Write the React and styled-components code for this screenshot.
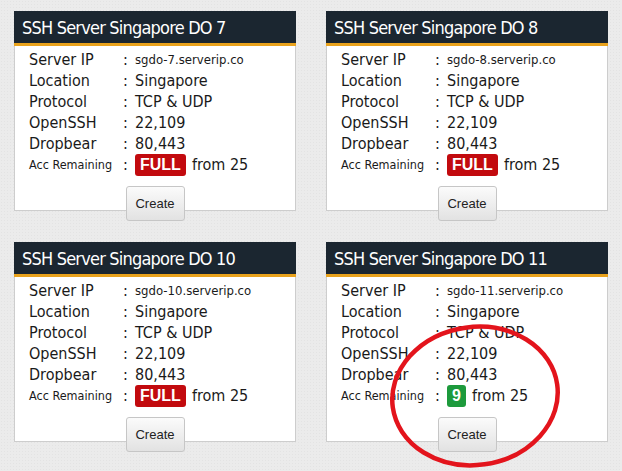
import styled, { createGlobalStyle } from "styled-components";

const GlobalStyle = createGlobalStyle`
  body {
    margin: 0;
    background-color: #ebebeb;
    font-family: "DejaVu Sans", "Liberation Sans", sans-serif;
  }
`;

const Page = styled.div`
  position: relative;
  width: 622px;
  height: 471px;
  overflow: hidden;
  box-sizing: border-box;
  padding: 11px 0 0 14px;
  background-color: #ebebeb;
  background-image: radial-gradient(rgba(0, 0, 0, 0.035) 1px, transparent 1px);
  background-size: 3px 3px;
`;

const Grid = styled.div`
  display: grid;
  grid-template-columns: 282px 282px;
  column-gap: 30px;
  row-gap: 31px;
`;

const Card = styled.div`
  height: 200px;
  box-sizing: border-box;
  background: #fff;
  border: 1px solid #cdcdcd;
  border-top: none;
  display: flex;
  flex-direction: column;
`;

const Header = styled.div`
  flex-shrink: 0;
  height: 32px;
  background: #1b2630;
  border-bottom: 3px solid #e9a21c;
  margin: 0 -1px;
  display: flex;
  align-items: center;
  padding-left: 8px;
  color: #fff;
  font-size: 18px;
  letter-spacing: -0.8px;
  font-stretch: condensed;
  white-space: nowrap;
`;

const Rows = styled.div`
  flex-shrink: 0;
  display: grid;
  grid-template-columns: 94px 12px auto;
  grid-auto-rows: 21px;
  padding: 3px 0 0 14px;
  color: #1a1a1a;
  font-size: 16px;
  font-stretch: condensed;
  align-items: center;
`;

const Label = styled.div`
  font-size: ${(p) => (p.small ? "12.5px" : "16px")};
  white-space: nowrap;
`;

const Colon = styled.div``;

const Value = styled.div`
  font-size: ${(p) => (p.small ? "13px" : "16px")};
  white-space: nowrap;
  display: flex;
  align-items: center;
  gap: 6px;
`;

const Badge = styled.span`
  display: inline-block;
  background: ${(p) => (p.green ? "#1d9a3c" : "#c20a0e")};
  color: #fff;
  font-family: "Liberation Sans", Arial, sans-serif;
  font-weight: bold;
  font-size: 16px;
  line-height: 22px;
  padding: 0 5px;
  border-radius: 3px;
`;

const Footer = styled.div`
  flex-shrink: 0;
  display: flex;
  justify-content: center;
  padding-top: 11px;
`;

const CreateButton = styled.button`
  width: 59px;
  height: 35px;
  border: 1px solid #c6c6c6;
  border-radius: 3px;
  background: linear-gradient(#fbfbfb, #e2e2e2);
  font-family: "Liberation Sans", Arial, sans-serif;
  font-size: 13px;
  color: #222;
  padding: 0;
  cursor: pointer;
`;

const Annotation = styled.svg`
  position: absolute;
  left: 0;
  top: 0;
  pointer-events: none;
`;

const servers = [
  { n: 7, free: null },
  { n: 8, free: null },
  { n: 10, free: null },
  { n: 11, free: 9 },
];

const ServerCard = ({ n, free }) => (
  <Card>
    <Header>SSH Server Singapore DO {n}</Header>
    <Rows>
      <Label>Server IP</Label>
      <Colon>:</Colon>
      <Value small>sgdo-{n}.serverip.co</Value>
      <Label>Location</Label>
      <Colon>:</Colon>
      <Value>Singapore</Value>
      <Label>Protocol</Label>
      <Colon>:</Colon>
      <Value>TCP &amp; UDP</Value>
      <Label>OpenSSH</Label>
      <Colon>:</Colon>
      <Value>22,109</Value>
      <Label>Dropbear</Label>
      <Colon>:</Colon>
      <Value>80,443</Value>
      <Label small>Acc Remaining</Label>
      <Colon>:</Colon>
      <Value>
        {free ? <Badge green>{free}</Badge> : <Badge>FULL</Badge>}
        <span>from 25</span>
      </Value>
    </Rows>
    <Footer>
      <CreateButton>Create</CreateButton>
    </Footer>
  </Card>
);

export default function App() {
  return (
    <>
      <GlobalStyle />
      <Page>
        <Grid>
          {servers.map((s) => (
            <ServerCard key={s.n} {...s} />
          ))}
        </Grid>
        <Annotation width="622" height="471">
          <ellipse
            cx="475"
            cy="396"
            rx="83"
            ry="69"
            fill="none"
            stroke="#e3141c"
            strokeWidth="4.5"
            transform="rotate(-8 475 396)"
          />
        </Annotation>
      </Page>
    </>
  );
}
